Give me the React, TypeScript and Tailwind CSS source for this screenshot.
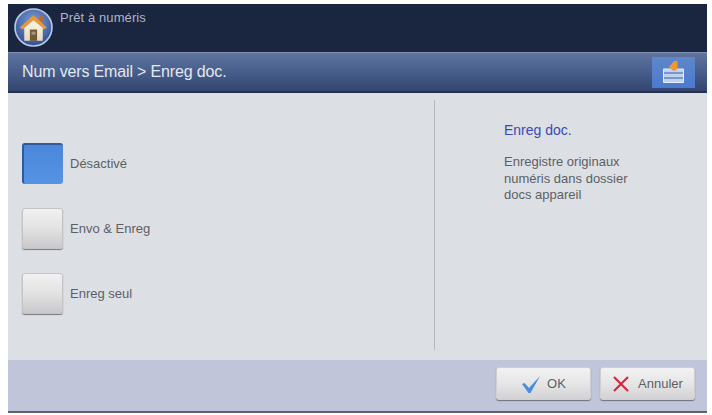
const font = { fontFamily: '"Liberation Sans", Arial, sans-serif' };

function Home() {
  return (
    <svg width="39" height="39" viewBox="0 0 38 38" className="shrink-0">
      <defs>
        <radialGradient id="hb" cx="50%" cy="35%" r="65%">
          <stop offset="0%" stopColor="#7f9fd6" />
          <stop offset="100%" stopColor="#2f4f93" />
        </radialGradient>
        <linearGradient id="wall" x1="0" y1="0" x2="0" y2="1">
          <stop offset="0%" stopColor="#fdf7e8" />
          <stop offset="100%" stopColor="#e6d9bd" />
        </linearGradient>
      </defs>
      <circle cx="19" cy="19" r="18" fill="url(#hb)" stroke="#b9c8e4" strokeWidth="1.6" />
      <rect x="25" y="7" width="3" height="6" fill="#c06a28" />
      <path d="M5.5 19 L19 7 L32 19 L29 21 L19 12 L8.5 21 Z" fill="#e89a3a" />
      <path d="M10 19.5 L19 12 L28 19.5 V32 H10 Z" fill="url(#wall)" />
      <rect x="15.5" y="21" width="7" height="11" fill="#6f5a3c" />
      <rect x="17" y="23" width="4" height="3" fill="#a89670" />
    </svg>
  );
}

function ToolIcon() {
  return (
    <svg width="23" height="24" viewBox="0 0 23 24">
      <path d="M1.5 9 H21.5 V22.5 H1.5 Z" fill="#bcd2f0" stroke="#e4edf9" strokeWidth="1" />
      <path d="M2 13 H21 M2 18 H21" stroke="#3a5f9f" strokeWidth="1.2" />
      <path d="M7 7 L12 1 L15.5 1 L15.5 9 L12 11 L9 9 Z" fill="#ee9a2c" />
    </svg>
  );
}

function Option({ label, active }: { label: string; active?: boolean }) {
  return (
    <div className="flex items-center gap-[7px] h-[42px]">
      <div
        className={
          active
            ? "w-[41px] h-[41px] rounded-[3px] bg-gradient-to-b from-[#4a86da] to-[#5793e3] border-l-2 border-t-2 border-[#2f5a9c]"
            : "w-[41px] h-[41px] rounded-[3px] border border-[#c4c4c6] bg-gradient-to-b from-[#f1f1f1] via-[#e2e2e3] to-[#c9c9cb] shadow-[0_1px_1px_#77777d]"
        }
      />
      <span className="text-[13px] mt-[2px] text-[#5c5f66]">{label}</span>
    </div>
  );
}

function FootButton({ w, icon, label, gap }: { w: string; icon: React.ReactNode; label: string; gap: string }) {
  return (
    <div className={`${w} ${gap} h-[33px] rounded-[3px] flex items-center justify-center bg-gradient-to-b from-[#f2f2f2] via-[#e6e6e7] to-[#d2d2d4] border border-[#d0d0d3] shadow-[0_1px_1px_#6d7078]`}>
      {icon}
      <span className="text-[13px] text-[#5c5f66]">{label}</span>
    </div>
  );
}

export default function App() {
  return (
    <div className="w-[712px] h-[415px] bg-white pl-[8px] pr-[5px] pt-[4px] pb-[2px] overflow-hidden" style={font}>
      <div className="h-full flex flex-col">
        <div className="h-[48px] bg-[#1a2540] flex items-start pl-[6px] pt-[4px] gap-[7px] shrink-0">
          <Home />
          <span className="text-[13px] leading-[14px] mt-[3px] text-[#aeb5c6] tracking-[0.1px]">Prêt à numéris</span>
        </div>
        <div className="h-[41px] shrink-0 flex items-center justify-between pl-[14px] pr-[12px] bg-gradient-to-b from-[#5f759f] via-[#475d8b] to-[#34466f] border-t border-[#7f90b0] border-b-2 border-b-[#26324f]">
          <span className="text-[16px] text-[#e3e8f1] tracking-[-0.15px]">Num vers Email &gt; Enreg doc.</span>
          <div className="w-[43px] h-[31px] flex items-center justify-center bg-gradient-to-b from-[#5f86c8] to-[#4a7ad0]">
            <ToolIcon />
          </div>
        </div>
        <div className="flex-1 flex bg-[#dcdfe4] min-h-0">
          <div className="w-[426px] flex flex-col pl-[14px] pt-[49px] gap-[23px] shrink-0">
            <Option label="Désactivé" active />
            <Option label="Envo & Enreg" />
            <Option label="Enreg seul" />
          </div>
          <div className="flex-1 mt-[7px] mb-[10px] border-l border-[#b6b9bf] pl-[69px] pt-[22px]">
            <div className="text-[14px] text-[#3a49b4] leading-[16px]">Enreg doc.</div>
            <div className="mt-[16px] text-[13px] leading-[16.5px] text-[#5c5f66]">
              Enregistre originaux
              <br />
              numéris dans dossier
              <br />
              docs appareil
            </div>
          </div>
        </div>
        <div className="h-[53px] shrink-0 bg-[#c0c5d9] border-b-2 border-[#5c6170] flex items-start justify-end gap-[9px] pt-[7px] pr-[12px]">
          <FootButton
            w="w-[95px]"
            gap="gap-[6px]"
            label="OK"
            icon={
              <svg width="20" height="18" viewBox="0 0 20 18">
                <path d="M1 9 L3.5 8 L8 13 L19 1 L9.5 18 L7.5 18 Z" fill="#4a8fd8" />
              </svg>
            }
          />
          <FootButton
            w="w-[95px]"
            gap="gap-[8px]"
            label="Annuler"
            icon={
              <svg width="18" height="16" viewBox="0 0 18 16">
                <path d="M2 1 L16 15 M16 1 L2 15" stroke="#d8283c" strokeWidth="2.2" />
              </svg>
            }
          />
        </div>
      </div>
    </div>
  );
}
